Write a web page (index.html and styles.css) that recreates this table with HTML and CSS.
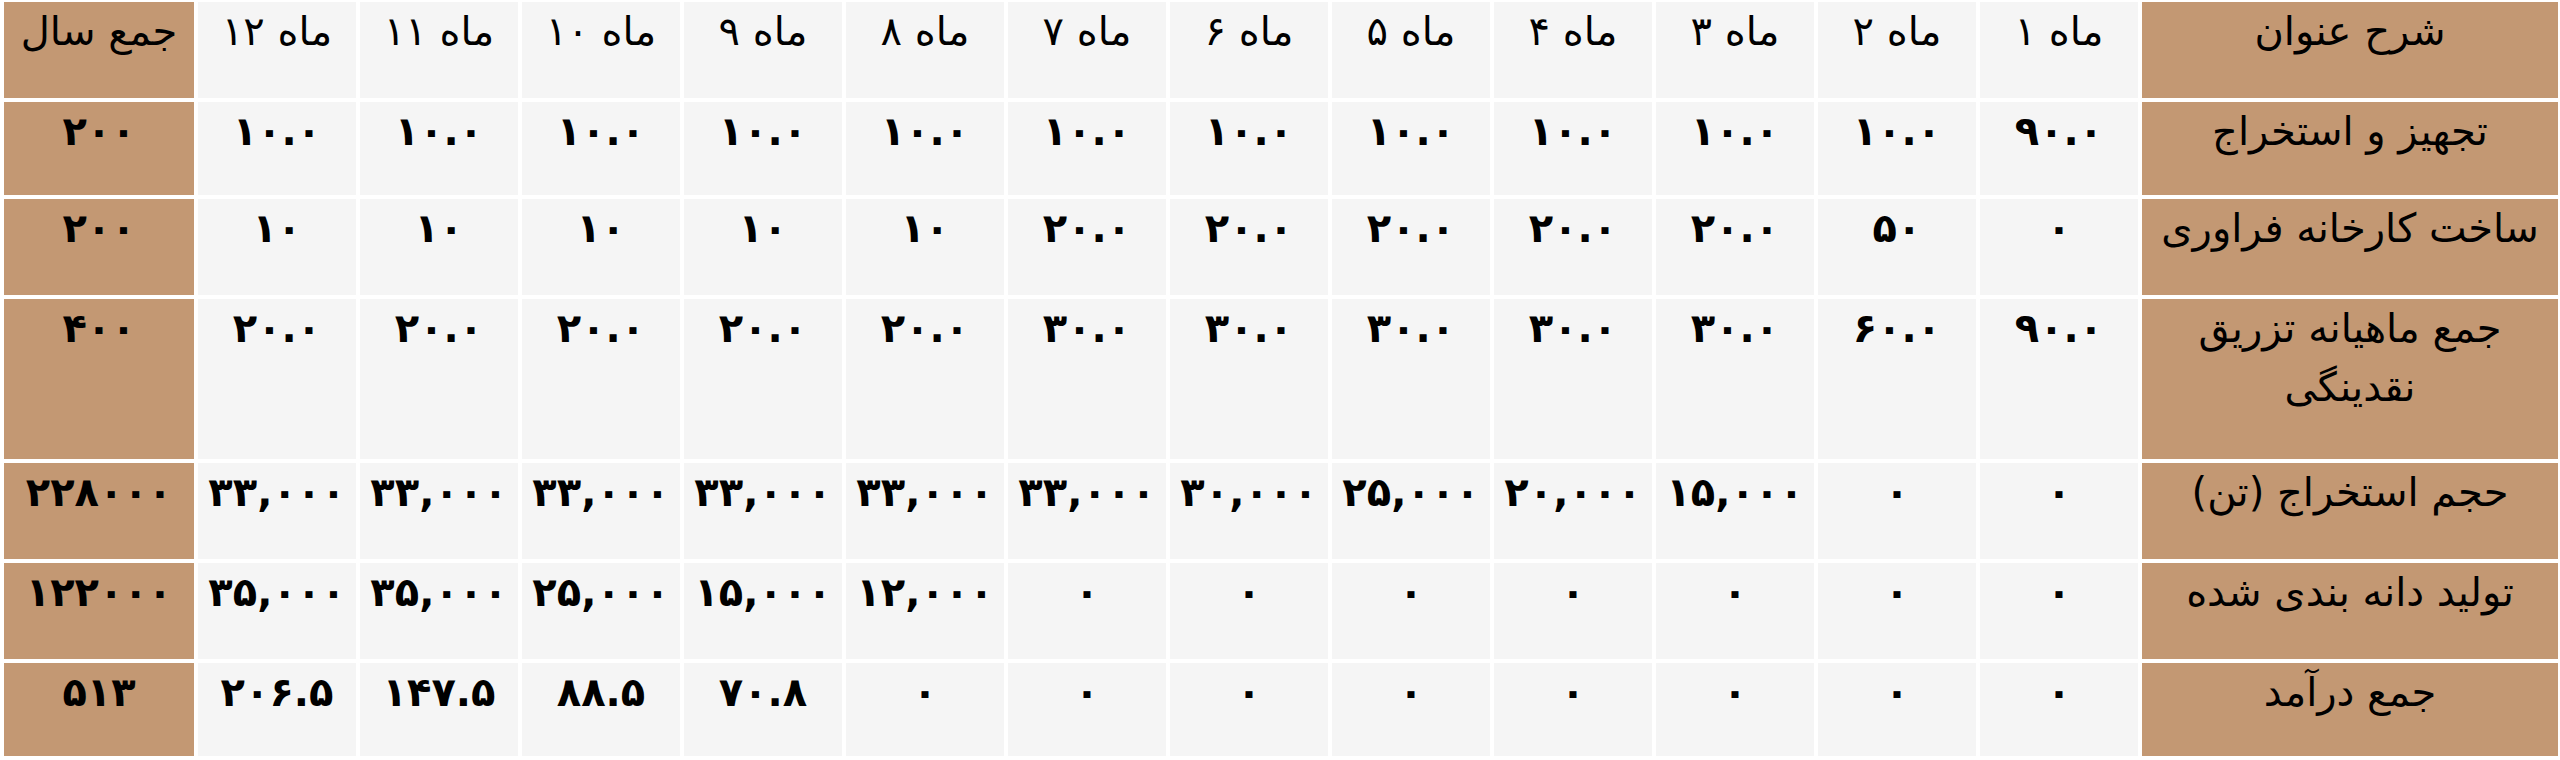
FILE: index.html
```html
<!DOCTYPE html>
<html lang="fa" dir="rtl">
<head>
<meta charset="utf-8">
<title>جدول برنامه ماهیانه</title>
<link rel="stylesheet" href="styles.css">
</head>
<body>
<table class="plan">
  <colgroup>
    <col class="c-label">
    <col class="c-month"><col class="c-month"><col class="c-month"><col class="c-month">
    <col class="c-month"><col class="c-month"><col class="c-month"><col class="c-month">
    <col class="c-month"><col class="c-month"><col class="c-month"><col class="c-month">
    <col class="c-total">
  </colgroup>
  <thead>
    <tr class="r-head">
      <th class="label">شرح عنوان</th>
      <th class="month">ماه ۱</th>
      <th class="month">ماه ۲</th>
      <th class="month">ماه ۳</th>
      <th class="month">ماه ۴</th>
      <th class="month">ماه ۵</th>
      <th class="month">ماه ۶</th>
      <th class="month">ماه ۷</th>
      <th class="month">ماه ۸</th>
      <th class="month">ماه ۹</th>
      <th class="month">ماه ۱۰</th>
      <th class="month">ماه ۱۱</th>
      <th class="month">ماه ۱۲</th>
      <th class="total">جمع سال</th>
    </tr>
  </thead>
  <tbody>
    <tr class="r-a">
      <th class="label">تجهیز و استخراج</th>
      <td>۹۰.۰</td><td>۱۰.۰</td><td>۱۰.۰</td><td>۱۰.۰</td><td>۱۰.۰</td><td>۱۰.۰</td>
      <td>۱۰.۰</td><td>۱۰.۰</td><td>۱۰.۰</td><td>۱۰.۰</td><td>۱۰.۰</td><td>۱۰.۰</td>
      <td class="total">۲۰۰</td>
    </tr>
    <tr class="r-b">
      <th class="label">ساخت کارخانه فراوری</th>
      <td>۰</td><td>۵۰</td><td>۲۰.۰</td><td>۲۰.۰</td><td>۲۰.۰</td><td>۲۰.۰</td>
      <td>۲۰.۰</td><td>۱۰</td><td>۱۰</td><td>۱۰</td><td>۱۰</td><td>۱۰</td>
      <td class="total">۲۰۰</td>
    </tr>
    <tr class="r-tall">
      <th class="label">جمع ماهیانه تزریق<br>نقدینگی</th>
      <td>۹۰.۰</td><td>۶۰.۰</td><td>۳۰.۰</td><td>۳۰.۰</td><td>۳۰.۰</td><td>۳۰.۰</td>
      <td>۳۰.۰</td><td>۲۰.۰</td><td>۲۰.۰</td><td>۲۰.۰</td><td>۲۰.۰</td><td>۲۰.۰</td>
      <td class="total">۴۰۰</td>
    </tr>
    <tr class="r-b">
      <th class="label">حجم استخراج (تن)</th>
      <td>۰</td><td>۰</td><td>۱۵,۰۰۰</td><td>۲۰,۰۰۰</td><td>۲۵,۰۰۰</td><td>۳۰,۰۰۰</td>
      <td>۳۳,۰۰۰</td><td>۳۳,۰۰۰</td><td>۳۳,۰۰۰</td><td>۳۳,۰۰۰</td><td>۳۳,۰۰۰</td><td>۳۳,۰۰۰</td>
      <td class="total">۲۲۸۰۰۰</td>
    </tr>
    <tr class="r-b">
      <th class="label">تولید دانه بندی شده</th>
      <td>۰</td><td>۰</td><td>۰</td><td>۰</td><td>۰</td><td>۰</td>
      <td>۰</td><td>۱۲,۰۰۰</td><td>۱۵,۰۰۰</td><td>۲۵,۰۰۰</td><td>۳۵,۰۰۰</td><td>۳۵,۰۰۰</td>
      <td class="total">۱۲۲۰۰۰</td>
    </tr>
    <tr class="r-a">
      <th class="label">جمع درآمد</th>
      <td>۰</td><td>۰</td><td>۰</td><td>۰</td><td>۰</td><td>۰</td>
      <td>۰</td><td>۰</td><td>۷۰.۸</td><td>۸۸.۵</td><td>۱۴۷.۵</td><td>۲۰۶.۵</td>
      <td class="total">۵۱۳</td>
    </tr>
  </tbody>
</table>
</body>
</html>
```
FILE: styles.css
```css
html, body {
  margin: 0;
  padding: 0;
  background: #ffffff;
}

body {
  font-family: "DejaVu Sans", "Noto Sans", sans-serif;
  color: #000000;
  overflow: hidden;
}

.plan {
  direction: rtl;
  table-layout: fixed;
  border-collapse: separate;
  border-spacing: 4px;
  width: 2562px;
  margin: -2px -2px 0 0;
  float: left;
}

.c-label { width: 416px; }
.c-month { width: 158px; }
.c-total { width: 190px; }

.plan th,
.plan td {
  padding: 0 2px;
  text-align: center;
  vertical-align: top;
  font-size: 40px;
  line-height: 59px;
  white-space: nowrap;
  background: #f5f5f5;
}

.plan th {
  font-weight: normal;
}

.plan td {
  font-weight: bold;
}

.plan .label,
.plan .total {
  background: #c39873;
}

.r-head { height: 96px; }
.r-a { height: 93px; }
.r-b { height: 96px; }
.r-tall { height: 160px; }
```
